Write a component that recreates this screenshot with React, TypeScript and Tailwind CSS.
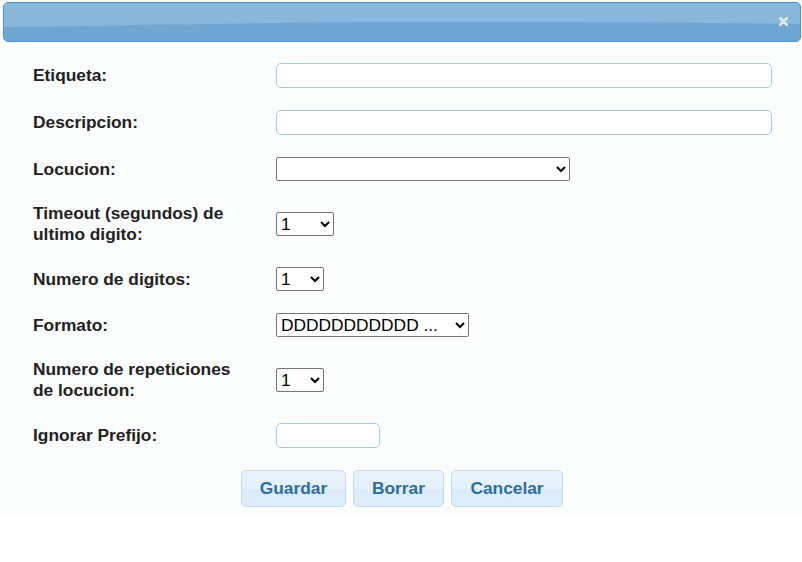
import React from 'react';

const font = { fontFamily: '"Liberation Sans", Arial, sans-serif' };

const Label: React.FC<{ children: React.ReactNode }> = ({ children }) => (
  <div className="w-[212px] shrink-0 text-[17.33px] leading-[21px] font-bold text-[#222]">{children}</div>
);

const TextInput: React.FC<{ className?: string }> = ({ className = '' }) => (
  <input
    type="text"
    className={`h-[25px] bg-white border border-[#a6c9e2] rounded-[5px] outline-none px-1 ${className}`}
  />
);

const Select: React.FC<{ options: string[]; className?: string }> = ({ options, className = '' }) => (
  <select
    className={`h-[24px] bg-white border border-[#767676] rounded-[2px] text-[17.33px] leading-[20px] text-black pl-0 ${className}`}
    style={{ appearance: 'auto', ...font }}
  >
    {options.map((o) => (
      <option key={o}>{o}</option>
    ))}
  </select>
);

const Button: React.FC<{ children: React.ReactNode; className?: string }> = ({ children, className = '' }) => (
  <button
    className={`h-[37px] border border-[#c5dbec] rounded-[5px] bg-[linear-gradient(to_bottom,#eaf4fc_0%,#e4f0fb_50%,#dbebf9_52%,#dfeefb_100%)] text-[#2e6e9e] font-bold text-[17.33px] ${className}`}
    style={font}
  >
    {children}
  </button>
);

export default function App() {
  return (
    <div className="w-[802px] h-[562px] bg-white" style={font}>
      <div className="bg-[#fbfcfc] pb-[8px]">
        {/* Title bar */}
        <div className="pt-[2px] pl-[3px] pr-[1px]">
          <div className="relative h-[40px] rounded-[5px] border border-[#4a93d2] overflow-hidden bg-[#6fa6d2]">
            <svg className="absolute inset-0" width="100%" height="100%" viewBox="0 0 798 38" preserveAspectRatio="none">
              <rect x="0" y="0" width="798" height="38" fill="#6fa6d2" />
              <path d="M0 0 H798 V21 C650 19 520 19 400 19 C280 19 150 22 0 24 Z" fill="#89b6db" />
            </svg>
            <svg className="absolute right-[12px] top-[14px]" width="9" height="9" viewBox="0 0 9 9">
              <path d="M1 1 L8 8 M8 1 L1 8" stroke="#dfeaf5" strokeWidth="2.6" strokeLinecap="round" />
            </svg>
          </div>
        </div>

        {/* Form */}
        <div className="pl-[33px] pt-[21px] flex flex-col gap-[22px]">
          <div className="flex items-center">
            <Label>Etiqueta:</Label>
            <TextInput className="ml-[31px] w-[496px]" />
          </div>
          <div className="flex items-center">
            <Label>Descripcion:</Label>
            <TextInput className="ml-[31px] w-[496px]" />
          </div>
          <div className="flex items-center">
            <Label>Locucion:</Label>
            <Select className="ml-[31px] w-[294px]" options={['']} />
          </div>
          <div className="flex items-center">
            <Label>Timeout (segundos) de ultimo digito:</Label>
            <Select className="ml-[31px] w-[58px]" options={['1', '2', '3', '4', '5', '10']} />
          </div>
          <div className="flex items-center">
            <Label>Numero de digitos:</Label>
            <Select className="ml-[31px] w-[48px]" options={['1', '2', '3', '4', '5']} />
          </div>
          <div className="flex items-center">
            <Label>Formato:</Label>
            <Select className="ml-[31px] w-[193px]" options={['DDDDDDDDDDD ...']} />
          </div>
          <div className="flex items-center">
            <Label>Numero de repeticiones de locucion:</Label>
            <Select className="ml-[31px] w-[48px]" options={['1', '2', '3']} />
          </div>
          <div className="flex items-center">
            <Label>Ignorar Prefijo:</Label>
            <TextInput className="ml-[31px] w-[104px]" />
          </div>
        </div>

        {/* Buttons */}
        <div className="flex justify-center gap-[7px] mt-[22px] pl-[2px]">
          <Button className="w-[105px]">Guardar</Button>
          <Button className="w-[91px]">Borrar</Button>
          <Button className="w-[112px]">Cancelar</Button>
        </div>
      </div>
    </div>
  );
}
